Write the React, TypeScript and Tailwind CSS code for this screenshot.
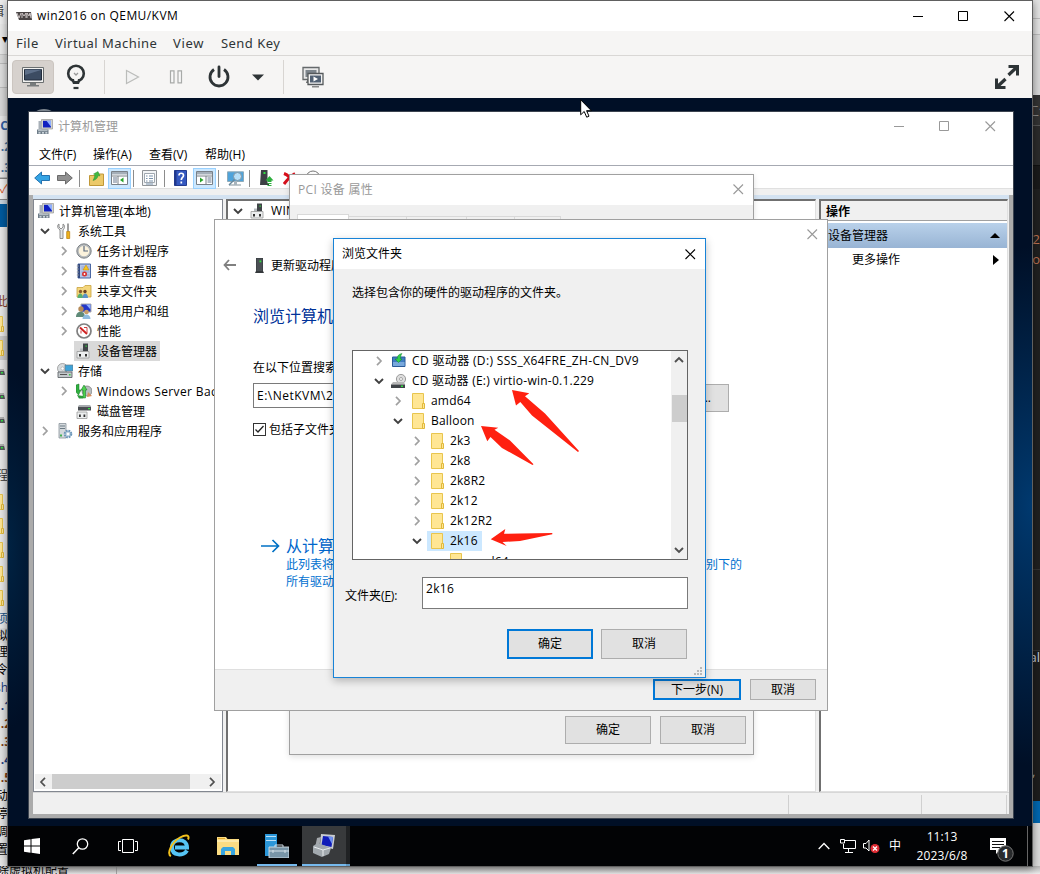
import React from 'react';

type Kids = { children?: React.ReactNode };

/* ---------- small shared glyphs ---------- */

function CloseX({ className = '' }: { className?: string }) {
  return (
    <svg width="11" height="11" viewBox="0 0 11 11" className={'shrink-0 ' + className}>
      <path d="M.5.5l9.500 9.500M10 .5L.5 10" stroke="currentColor" strokeWidth="1.1" fill="none" />
    </svg>
  );
}

function WindowButtons({ className }: { className: string }) {
  return (
    <div className={'flex items-center ' + className}>
      <svg width="11" height="11"><path d="M0 5.5h10" stroke="currentColor" /></svg>
      <svg width="11" height="11" className="ml-[34px]"><path d="M.5.5h9v9h-9z" stroke="currentColor" fill="none" /></svg>
      <CloseX className="ml-[35px]" />
    </div>
  );
}

function Chevron({ open = false, color }: { open?: boolean; color?: string }) {
  return open ? (
    <svg width="10" height="10" viewBox="0 0 10 10" className="shrink-0">
      <path d="M1 3l4 4 4-4" stroke={color || '#404040'} strokeWidth="1.900" fill="none" />
    </svg>
  ) : (
    <svg width="10" height="10" viewBox="0 0 10 10" className="shrink-0">
      <path d="M3 .8l4 4.200-4 4.200" stroke={color || '#a0a0a0'} strokeWidth="1.700" fill="none" />
    </svg>
  );
}

function Ico({ children, s = 16 }: Kids & { s?: number }) {
  return (
    <svg width={s} height={s} viewBox="0 0 16 16" className="shrink-0">
      {children}
    </svg>
  );
}

const MgmtIcon = ({ s = 16 }: { s?: number }) => (
  <Ico s={s}>
    <path d="M4.500 .5H15.500v9.500H4.500z" fill="#d4d4cc" stroke="#888" strokeWidth=".6" />
    <path d="M6 1.800h8v6.700H6z" fill="#1020c0" />
    <path d="M9.500 1.800H14v6z" fill="#8fb0ff" />
    <path d="M1.500 2h3v8h-3z" fill="#a8b0b8" />
    <path d="M0 10.500h11.500v4.500H0z" fill="#6e7c88" />
    <path d="M1 11.200h9.500v1H1z" fill="#c5ced4" />
    <path d="M1.500 13.200h2v1.300h-2zM5 13.200h2v1.300H5zM8.300 13.200h2v1.300h-2z" fill="#e8eef2" />
  </Ico>
);
const ToolsIcon = () => (
  <Ico>
    <path d="M2 1v3l2 2 2-2V1c2 1 2 4 0 6v8.500H3V7C0 5 0 2 2 1z" fill="#e2e4e6" stroke="#777" strokeWidth=".8" />
    <path d="M11 .5v8" stroke="#777" strokeWidth="1.400" />
    <path d="M9.700 8.500h3v7h-3z" fill="#eeb21c" stroke="#b57a08" strokeWidth=".7" />
  </Ico>
);
const ClockIcon = () => (
  <Ico>
    <circle cx="8" cy="8" r="7.200" fill="#b5b9bc" stroke="#73787c" strokeWidth=".9" />
    <circle cx="8" cy="8" r="5.300" fill="#fbf2dc" />
    <path d="M8 3v5h4" stroke="#5a6a80" strokeWidth="1.200" fill="none" />
  </Ico>
);
const EventIcon = () => (
  <Ico>
    <path d="M2 1h12.500v14H2z" fill="#b7c6e8" stroke="#3a5a9a" strokeWidth=".9" />
    <path d="M2 1h2v14H2z" fill="#334a80" />
    <path d="M.8 3h2M.8 6h2M.8 9h2M.8 12h2" stroke="#999" />
    <path d="M5.500 4h8M5.500 6h8M5.500 9h8M5.500 12h8" stroke="#7d92c4" strokeWidth=".6" />
    <path d="M10 2l3 5H7z" fill="#f6c520" stroke="#c48a00" strokeWidth=".5" />
    <circle cx="8.500" cy="11" r="2.500" fill="#d83030" />
    <circle cx="8.500" cy="11" r=".9" fill="#fff" />
  </Ico>
);
const ShareIcon = () => (
  <Ico>
    <path d="M1 4.500h6L9 2.500h6V14H1z" fill="#f4d67c" stroke="#c9a23c" strokeWidth=".8" />
    <circle cx="4.500" cy="8.500" r="1.700" fill="#8a5a30" /><circle cx="9" cy="8.500" r="1.700" fill="#6a4226" />
    <path d="M1.500 15c0-6 5.500-6 5.500 0z" fill="#58b070" /><path d="M6.500 15c0-6 5.500-6 5.500 0z" fill="#5a92c8" />
  </Ico>
);
const UsersIcon = () => (
  <Ico>
    <path d="M5 1h10v8H5z" fill="#2438c8" stroke="#aaa" /><path d="M10 1.500h4.500v5z" fill="#90b0ff" />
    <circle cx="5" cy="6" r="2.700" fill="#b58a58" /><path d="M0 14c0-7 9-7 9 0z" fill="#5f8a78" />
    <circle cx="10.500" cy="9" r="2.300" fill="#c79c6a" /><path d="M6.500 16c0-6 8-6 8 0z" fill="#8fbce0" />
  </Ico>
);
const PerfIcon = () => (
  <Ico>
    <circle cx="8" cy="8" r="7" fill="#fff" stroke="#808080" strokeWidth="1.700" />
    <path d="M4 4.500l7 6.500" stroke="#d02020" strokeWidth="1.900" />
    <path d="M8 4.500h3v5.500M5 7.500v3" stroke="#d04040" strokeWidth="1" fill="none" />
  </Ico>
);
const DeviceIcon = () => (
  <Ico>
    <path d="M7 .5h5v8H7z" fill="#404448" /><path d="M9.500 2.500h1.300v1.300H9.500z" fill="#30e040" />
    <path d="M4 5.500h3V9H4z" fill="#b8bcc0" />
    <path d="M1 8.500h12v6.500H1z" fill="#eceeef" stroke="#999" strokeWidth=".8" />
    <path d="M3 11h2v2.500H3zM9 11h2v2.500H9z" fill="#333" />
  </Ico>
);
const StorageIcon = () => (
  <Ico>
    <circle cx="5.500" cy="5.500" r="5" fill="#d8dcde" stroke="#888" strokeWidth=".7" /><circle cx="5.500" cy="5.500" r="1.600" fill="#fff" stroke="#999" strokeWidth=".5" />
    <path d="M8 2h8v6H8z" fill="#3fa3d8" stroke="#6c7d88" strokeWidth=".7" />
    <path d="M1 9h14v5.500H1z" fill="#c3c8cb" stroke="#62686c" strokeWidth=".9" /><path d="M3 11.500h7" stroke="#555" /><path d="M12 11h1.500v1.500H12z" fill="#30d040" />
  </Ico>
);
const BackupIcon = () => (
  <Ico>
    <circle cx="11" cy="8" r="5" fill="#b8bdc0" stroke="#777" strokeWidth=".7" /><path d="M12 9l4 4-5 1z" fill="#d89060" />
    <path d="M0 2l3-1v6h2l-2.500 5L0 9z" fill="#30b040" stroke="#107020" strokeWidth=".5" />
    <path d="M7 15V7H5l3-5 3 5H9.500v8z" fill="#4fd050" stroke="#107020" strokeWidth=".5" />
    <path d="M1 12l6 1v2.500H3z" fill="#2a9a3a" />
  </Ico>
);
const DiskIcon = () => (
  <Ico>
    <path d="M2 3.500h13v4H2z" fill="#4a4e52" /><path d="M3 2h11l1 1.500H2z" fill="#a8acb0" /><path d="M12 5h2v1.200h-2z" fill="#30e040" />
    <path d="M1 9h10v6.500H1z" fill="#eceeef" stroke="#999" strokeWidth=".8" /><path d="M3 11.500h1.800v2.500H3zM7.500 11.500h1.800v2.500H7.500z" fill="#333" />
  </Ico>
);
const ServicesIcon = () => (
  <Ico>
    <path d="M2 .5h7v14.500H2z" fill="#d4d9dd" stroke="#89939a" strokeWidth=".8" />
    <path d="M3 3h5M3 5.500h5" stroke="#6b7a84" /><path d="M3 11.500h2v2H3z" fill="#40b050" />
    <circle cx="11" cy="11" r="3.300" fill="#bcd0e0" stroke="#6a95b8" strokeWidth="2" strokeDasharray="1.700 .9" /><circle cx="11" cy="11" r="1.300" fill="#fff" />
  </Ico>
);
const FolderIcon = () => (
  <svg width="14" height="16" viewBox="0 0 14 16" className="shrink-0">
    <path d="M.5.500h11v15H.5z" fill="#ffe694" stroke="#e8c54e" />
    <path d="M10.500 10.500h2v5h-2z" fill="#ffe694" stroke="#e0b93c" />
  </svg>
);
const TowerIcon = () => (
  <svg width="9" height="15" viewBox="0 0 9 15"><path d="M1 0h7v13l1 2H0l1-2z" fill="#35393c" /><path d="M1.500.5h6v12.500h-6z" fill="#4b5054" /><path d="M4.500 2.500h1.800v1.800H4.500z" fill="#30e040" /></svg>
);

/* ---------- background strips ---------- */

const leftStrip: { h: number; t?: string; c: string }[] = [
  { h: 24, t: '辑', c: 'bg-[#ededed] text-[#444] pr-[4px]' },
  { h: 31, t: '▾', c: 'bg-[#e8e8e8] text-black border-b border-[#c6c6c6]' },
  { h: 9, c: 'bg-[#dadada] border-b border-[#bbb]' },
  { h: 24, c: 'bg-[#dedede] border-b border-[#bbb]' },
  { h: 28, c: 'bg-[#d8d8d8]' },
  { h: 20, t: 'C', c: 'bg-[#e6e6e6] text-[#315c9f] font-bold' },
  { h: 22, t: '.2', c: 'bg-[#e6e6e6] text-[#4270a0] font-bold' },
  { h: 20, t: '.3', c: 'bg-[#e6e6e6] text-[#4270a0] font-bold border-b border-[#bbb]' },
  { h: 22, t: '✓', c: 'bg-[#f0f0f0] text-[#d86030] border-y border-[#888]' },
  { h: 27, c: 'bg-[#005a9e] border-t-4 border-[#c8d4de]' },
  { h: 65, c: 'bg-[#e7e7e7]' },
  { h: 20, t: '此', c: 'bg-[#e7e7e7] text-[#84402c]' },
  { h: 24, t: 'F', c: 'bg-[#e7e7e7]' },
  { h: 24, t: 'F', c: 'bg-[#c9c9c9]' },
  { h: 24, t: 'D', c: 'bg-[#e7e7e7]' },
  { h: 24, t: 'D', c: 'bg-[#e7e7e7]' },
  { h: 24, t: 'D', c: 'bg-[#e7e7e7]' },
  { h: 30, t: 'D', c: 'bg-[#e7e7e7]' },
  { h: 28, t: '程', c: 'bg-[#e7e7e7] text-[#333]' },
  { h: 24, t: 'F', c: 'bg-[#e7e7e7]' },
  { h: 24, t: 'F', c: 'bg-[#e7e7e7]' },
  { h: 24, t: 'F', c: 'bg-[#e7e7e7]' },
  { h: 24, t: 'F', c: 'bg-[#e7e7e7]' },
  { h: 24, t: 'F', c: 'bg-[#e7e7e7]' },
  { h: 18, t: '项', c: 'bg-[#e7e7e7] text-[#225588]' },
  { h: 15, t: '拟', c: 'bg-[#dcdcdc] text-black' },
  { h: 18, t: '理', c: 'bg-[#e3e3e3] text-black' },
  { h: 18, t: '令', c: 'bg-[#e3e3e3] text-black' },
  { h: 18, t: 'sh', c: 'bg-[#e3e3e3] text-[#203c80]' },
  { h: 18, t: '.1', c: 'bg-[#e3e3e3] text-[#203c80] font-bold' },
  { h: 18, t: '.2', c: 'bg-[#e3e3e3] text-[#7a3a10] font-bold' },
  { h: 18, t: '.3', c: 'bg-[#e3e3e3] text-[#7a3a10] font-bold' },
  { h: 18, t: '.4', c: 'bg-[#e3e3e3] text-[#203c80] font-bold' },
  { h: 18, t: '.5', c: 'bg-[#e3e3e3] text-[#7a3a10] font-bold' },
  { h: 18, t: '动', c: 'bg-[#e3e3e3] text-black' },
  { h: 18, t: '停', c: 'bg-[#e3e3e3] text-black' },
  { h: 18, t: '调', c: 'bg-[#e3e3e3] text-black' },
  { h: 17, t: '置', c: 'bg-[#e3e3e3] text-black' },
];

function StripItem({ t }: { t?: string }) {
  if (t === 'F') return <span className="mr-[3px] shrink-0"><FolderIcon /></span>;
  if (t === 'D') return <svg width="12" height="8" className="mr-[3px] shrink-0"><path d="M0 2h11l1 5H0z" fill="#55595c" /><path d="M0 1h11v2H0z" fill="#b0b0b0" /><path d="M8 4h2v1.500H8z" fill="#3d4" /></svg>;
  return <span className={t && t.startsWith('.') ? 'mr-[-3px]' : ''}>{t}</span>;
}

function Backdrop() {
  return (
    <div className="flex h-full flex-col">
      <div className="flex h-[866px] justify-between">
        <div className="flex w-[8px] flex-col overflow-hidden text-[12px] leading-none">
          {leftStrip.map((r, i) => (
            <div key={i} style={{ height: r.h }} className={'flex shrink-0 items-center justify-end overflow-hidden ' + r.c}>
              <StripItem t={r.t} />
            </div>
          ))}
        </div>
        <div className="flex w-[8px] flex-col overflow-hidden text-[13px] leading-none">
          <div className="h-[18px] bg-[#e2e2e2]" />
          <div className="h-[17px] border-y border-[#bbb] bg-[#e2e2e2]" />
          <div className="h-[60px] bg-[#d8d8d8]" />
          <div className="flex h-[30px] items-center justify-start bg-[#333] text-[#888]"><span className="ml-[-6px] whitespace-nowrap">工作</span></div>
          <div className="h-[40px] border-t border-[#555] bg-[#2b2b2b]" />
          <div className="h-[24px] border-t border-[#111] bg-[#1a1a1a]" />
          <div className="h-[44px] bg-[#202020]" />
          <div className="flex h-[20px] justify-end bg-[#202020] text-[#bd7253]">=2</div>
          <div className="flex h-[316px] justify-end bg-[#202020] text-[#bd7253]">ro</div>
          <div className="h-[82px] border-y border-[#333] bg-[#202020]" />
          <div className="flex h-[114px] justify-end bg-[#1d1d1d] text-[#c5cede]">al</div>
          <div className="flex h-[36px] bg-[#1d1d1d] text-[#aaa]">,</div>
          <div className="h-[22px] bg-[#0067b0]" />
          <div className="h-[43px] bg-[#dcdcdc]" />
        </div>
      </div>
      <div className="flex h-2 overflow-hidden bg-gradient-to-b from-[#b5b5b5] to-[#ececec] text-[12px] leading-[9px] text-black">
        <div className="w-[117px] border-r border-[#aaa] whitespace-nowrap"><span className="ml-[-3px]">除虚拟机配置</span></div>
      </div>
    </div>
  );
}

/* ---------- viewer chrome ---------- */

function ViewerChrome() {
  return (
    <>
      <div className="flex h-[30px] items-center bg-white pl-2 text-[12px] text-black">
        <svg width="16" height="10" viewBox="0 0 16 10"><path d="M0 1h15l1 8H3z" fill="#4a4545" /><path d="M1 2l2 5 2-5M6 7V2l2 3 2-3v5M11 7V2l2 3 1-3 1 5" stroke="#d8d0d0" strokeWidth=".9" fill="none" /></svg>
        <span className="ml-[5px] tracking-[.42px]">win2016 on QEMU/KVM</span>
        <WindowButtons className="ml-auto mr-[17px] text-black" />
      </div>
      <div className="flex h-[25px] items-center border-b border-[#d9d7d5] bg-[#f6f5f4] pl-2 pt-[2px] font-['Noto_Sans'] text-[13px] text-[#2e3436]">
        <span className="w-[39px] tracking-[.5px]">File</span>
        <span className="w-[118px] tracking-[.47px]">Virtual Machine</span>
        <span className="w-[48px] tracking-[.7px]">View</span>
        <span className="tracking-[.45px]">Send Key</span>
      </div>
      <div className="flex h-[42px] items-center bg-[#f6f5f4] pl-1">
        <div className="flex h-[34px] w-[42px] items-center justify-center rounded-[4px] border border-[#cbc5c0] bg-[#d6d1cd]">
          <svg width="24" height="20" viewBox="0 0 24 20"><path d="M1.500.5h21v15h-21z" fill="#f2f2f0" stroke="#6b6f70" /><path d="M3.500 2.500h17v10.500h-17z" fill="#3c4c62" stroke="#222d3c" /><path d="M4 8l16-5v-.5H4z" fill="#5d6f88" /><path d="M9 16h6v2h3v1.500H6V18h3z" fill="#777b7c" /></svg>
        </div>
        <svg width="20" height="26" viewBox="0 0 20 26" className="ml-[12px]"><circle cx="10" cy="9.500" r="7.800" fill="none" stroke="#2e3436" strokeWidth="2.600" /><path d="M5 15l2 5h6l2-5z" fill="#2e3436" /><path d="M7.500 13h5l-1 4h-3z" fill="#f6f5f4" /><path d="M8 9l2 2 2-2" stroke="#999" strokeWidth="1.300" fill="none" /><path d="M7.500 24h5" stroke="#2e3436" strokeWidth="2.200" /></svg>
        <div className="ml-[18px] h-[34px] w-px bg-[#d8d5d2]" />
        <svg width="15" height="16" viewBox="0 0 15 16" className="ml-[20px]"><path d="M1.500 1.500L13.500 8l-12 6.500z" fill="#f2f2f2" stroke="#bbbcba" strokeWidth="1.200" /></svg>
        <svg width="14" height="14" viewBox="0 0 14 14" className="ml-[29px]"><path d="M1.500.8h3.500v12H1.500zM9 .8h3.500v12H9z" fill="#f8f8f8" stroke="#a8aaa8" strokeWidth="1.200" /></svg>
        <svg width="22" height="24" viewBox="0 0 22 24" className="ml-[25px]"><path d="M6 4.500a9 9 0 1 0 10 0" stroke="#2e3436" strokeWidth="2.800" fill="none" /><path d="M11 2v9.500" stroke="#2e3436" strokeWidth="2.800" strokeLinecap="round" /></svg>
        <svg width="12" height="7" viewBox="0 0 12 7" className="ml-[22px]"><path d="M0 .5h12L6 6.500z" fill="#2e3436" /></svg>
        <div className="ml-[19px] h-[34px] w-px bg-[#d8d5d2]" />
        <svg width="22" height="22" viewBox="0 0 22 22" className="ml-[18px]">
          <path d="M1 1.500h16v12H1z" fill="#e8e8e8" stroke="#65696b" strokeWidth="1.300" /><path d="M3.500 4h11v7h-11z" fill="#7d858c" /><path d="M5 14h3v3H4v-1.500h1z" fill="#777" />
          <path d="M6 7.500h15v11H6z" fill="#f3f3f3" stroke="#55595b" strokeWidth="1.300" /><path d="M8 9.500h11v7H8z" fill="#526173" /><path d="M11.500 10.500v5l4.500-2.500z" fill="#fff" /><path d="M10 20h7v1.500h-7z" fill="#888" />
        </svg>
        <svg width="26" height="26" viewBox="0 0 26 26" className="ml-auto mr-[12px]">
          <path d="M14.500 1H25v10.500h-3V6.500L20 4h-5.500z" fill="#2e3436" /><path d="M23 3l-8.500 8" stroke="#2e3436" strokeWidth="3.200" />
          <path d="M11.500 25H1V14.500h3v5L6 22h5.500z" fill="#2e3436" /><path d="M3 23l8.500-8" stroke="#2e3436" strokeWidth="3.200" />
        </svg>
      </div>
    </>
  );
}

/* ---------- computer management ---------- */

type Row = { l: number; ch?: 'o' | 'c'; icon: React.ReactNode; t: string; sel?: boolean; cls?: string };
const tree: Row[] = [
  { l: 0, icon: <MgmtIcon />, t: '计算机管理(本地)', cls: 'tracking-[.1px]' },
  { l: 1, ch: 'o', icon: <ToolsIcon />, t: '系统工具' },
  { l: 2, ch: 'c', icon: <ClockIcon />, t: '任务计划程序' },
  { l: 2, ch: 'c', icon: <EventIcon />, t: '事件查看器' },
  { l: 2, ch: 'c', icon: <ShareIcon />, t: '共享文件夹' },
  { l: 2, ch: 'c', icon: <UsersIcon />, t: '本地用户和组' },
  { l: 2, ch: 'c', icon: <PerfIcon />, t: '性能' },
  { l: 2, icon: <DeviceIcon />, t: '设备管理器', sel: true },
  { l: 1, ch: 'o', icon: <StorageIcon />, t: '存储' },
  { l: 2, ch: 'c', icon: <BackupIcon />, t: 'Windows Server Bac', cls: 'tracking-[.38px]' },
  { l: 2, icon: <DiskIcon />, t: '磁盘管理' },
  { l: 1, ch: 'c', icon: <ServicesIcon />, t: '服务和应用程序' },
];

function TreeRow({ r }: { r: Row }) {
  return (
    <div className={'flex h-5 items-center whitespace-nowrap ' + (r.l === 0 ? 'pl-1' : r.l === 1 ? 'pl-[6px]' : 'pl-[25px]')}>
      {r.l > 0 && <span className={'flex shrink-0 ' + (r.l === 1 ? 'w-[16px]' : 'w-[15px]')}>{r.ch && <Chevron open={r.ch === 'o'} />}</span>}
      <span className={'flex h-5 items-center pr-[3px] ' + (r.l === 0 ? '' : r.l === 1 ? 'pl-[1px] ' : 'pl-[2px] ') + (r.sel ? 'bg-[#d9d9d9]' : '')}>
        {r.icon}
        <span className={'ml-[5px] pt-px ' + (r.cls || '')}>{r.t}</span>
      </span>
    </div>
  );
}

function Toggle({ right = false }: { right?: boolean }) {
  return (
    <span className="flex h-[21px] w-[23px] items-center justify-center border border-[#99d1ff] bg-[#cce8ff]">
      <svg width="17" height="14" viewBox="0 0 17 14">
        <path d="M.5.5h16v13H.5z" fill="#fff" stroke="#788088" /><path d="M1 1h15v2.500H1z" fill="#a4aeb8" /><path d="M1 5h15" stroke="#788088" />
        {right ? (
          <><path d="M10 5v8" stroke="#788088" /><path d="M11.500 7h4M11.500 9h4M11.500 11h4" stroke="#687890" /><path d="M4 6.500v5L7.500 9z" fill="#28a428" /></>
        ) : (
          <><path d="M7 5v8" stroke="#788088" /><path d="M2 7h4M2 9h4M2 11h4" stroke="#687890" /><path d="M12.500 6.500v5L9 9z" fill="#28a428" /></>
        )}
      </svg>
    </span>
  );
}
const Sep = ({ className }: { className: string }) => <span className={'h-[17px] w-px bg-[#8c8c8c] ' + className} />;
const Slot = ({ children, className }: Kids & { className: string }) => <span className={'flex h-[21px] items-center justify-center ' + className}>{children}</span>;

function Toolbar() {
  return (
    <div className="flex h-[23px] items-center border-b border-[#e0e0e0] pl-[1px] pt-[2px]">
      <Slot className="w-6"><svg width="16" height="14" viewBox="0 0 16 14"><path d="M.7 7l6.800-6v3.500h8v5h-8V13z" fill="#35a4e4" stroke="#1668a8" strokeWidth=".9" /></svg></Slot>
      <Slot className="w-[22px]"><svg width="16" height="14" viewBox="0 0 16 14"><path d="M15.300 7L8.500 1v3.500h-8v5h8V13z" fill="#909090" stroke="#606060" strokeWidth=".9" /></svg></Slot>
      <Sep className="ml-[3px] mr-1" />
      <Slot className="w-6"><svg width="15" height="15" viewBox="0 0 15 15"><path d="M.5 4.500h6l1.500-1.500h6.500v11.500H.5z" fill="#ecc969" stroke="#c09838" /><path d="M4 9.500c1.500-3 1.500-4 2-5.500L4.500 3 9 .5l2 4.500-1.700-.5C8.500 7 7 9 4 9.500z" fill="#40b840" stroke="#1c8428" strokeWidth=".4" /></svg></Slot>
      <Toggle />
      <Sep className="ml-[2px] mr-1" />
      <Slot className="w-[23px]"><svg width="16" height="16" viewBox="0 0 16 16"><path d="M.5.500h14v15h-14z" fill="#f2f4f6" stroke="#909498" /><path d="M2.500 3.500h10v9h-10z" fill="#fff" stroke="#a0a8b0" /><path d="M4 6h1.500M7 6h4M4 8.500h1.500M7 8.500h4M4 11h1.500M7 11h4M4 14h7" stroke="#7892ac" /></svg></Slot>
      <Sep className="ml-[3px] mr-1" />
      <Slot className="mr-px w-[23px]"><svg width="13" height="16" viewBox="0 0 13 16"><path d="M.5.500h12v15H.5z" fill="#3458c0" stroke="#243c90" /><path d="M.5.500h2v15h-2z" fill="#20388c" /><path d="M5 5.500C5 2.500 9.500 2.500 9.500 5.500 9.500 7.500 7.300 7.500 7.300 10M7.300 11.500v2" stroke="#fff" strokeWidth="1.700" fill="none" /></svg></Slot>
      <Toggle right />
      <Sep className="ml-[2px] mr-1" />
      <Slot className="w-6"><svg width="17" height="15" viewBox="0 0 17 15"><path d="M.5.800h16v9.700H.5z" fill="#4fa3da" stroke="#8faab8" /><path d="M2 13.500h12v1H2z" fill="#809098" /><path d="M7 10h3v4H7z" fill="#a8b4bc" /><circle cx="10.500" cy="5.500" r="4" fill="#b8e0f8" stroke="#7f95a4" /><path d="M7.500 8.500L2 14" stroke="#68889c" strokeWidth="1.500" /></svg></Slot>
      <Sep className="ml-[2px] mr-1" />
      <Slot className="ml-px w-6"><svg width="14" height="16" viewBox="0 0 14 16"><path d="M1 0h6.500v13H9v2H0z" fill="#3c4044" /><path d="M3.500 2h2v2h-2z" fill="#30e040" /><path d="M9.500 6l4 4.500h-2V12h-4v-1.500h-2zM7.500 13h4v1h-4zM7.500 15h4v1h-4z" fill="#2cae3c" /></svg></Slot>
      <Slot className="w-[20px]"><svg width="13" height="13" viewBox="0 0 13 13"><path d="M1 1.500C5 3 9 8 11 12M12 1.500C7 4 4 8 1 12" stroke="#d8101c" strokeWidth="3" fill="none" /></svg></Slot>
      <Slot className="ml-[4px] w-[20px]"><svg width="16" height="16" viewBox="0 0 16 16"><circle cx="8" cy="8" r="7" fill="#fff" stroke="#777" /><path d="M5 4h6l-3 4z" fill="#333" /></svg></Slot>
    </div>
  );
}

function Management() {
  return (
    <div className="absolute left-[28px] top-[111px] flex h-[708px] w-[986px] flex-col border border-[#3c4450] bg-white">
      <div className="flex h-[29px] items-center pl-2 text-[12px] text-[#999]">
        <MgmtIcon />
        <span className="ml-[5px]">计算机管理</span>
        <WindowButtons className="ml-auto mr-[17px] text-[#999]" />
      </div>
      <div className="flex h-[25px] items-center border-b border-[#a6a9b2] pl-[10px] pt-[3px] text-[12px]">
        <span className="w-[54px]">文件(F)</span><span className="w-[56px]">操作(A)</span><span className="w-[56px]">查看(V)</span><span>帮助(H)</span>
      </div>
      <Toolbar />
      <div className="h-[6px] bg-[#f0f0f0]" />
      <div className="flex flex-1 flex-col border-x-4 border-b-4 border-[#ababab] bg-[#f0f0f0]">
        <div className="h-1 bg-[#d3e2f1]" />
        <div className="flex h-[593px]">
          <div className="flex w-[190px] flex-col border border-[#828790] bg-white pt-[1px] text-[12px]">
            <div className="flex-1 overflow-hidden">{tree.map((r) => <TreeRow key={r.t} r={r} />)}</div>
            <div className="mx-px mb-[2px] flex h-[15px] items-center bg-[#f0f0f0] pl-[3px] pr-1">
              <span className="flex w-[14px] rotate-180 justify-end"><Chevron color="#505050" /></span>
              <span className="h-full w-[138px] bg-[#cdcdcd]" />
              <span className="ml-auto"><Chevron color="#505050" /></span>
            </div>
          </div>
          <div className="ml-[3px] w-[590px] border-l-2 border-t-2 border-r border-b border-b-[#e0e0e0] border-l-[#707070] border-r-[#e0e0e0] border-t-[#707070] bg-white pl-[5px] text-[12px]">
            <div className="flex h-[20px] items-center"><Chevron open /><span className="ml-[7px]"><DeviceIcon /></span><span className="ml-[5px] tracking-[.3px]">WIN2016</span></div>
          </div>
          <div className="ml-[3px] w-[189px] border-l-2 border-t-2 border-r border-b border-b-[#e0e0e0] border-l-[#707070] border-r-[#e0e0e0] border-t-[#707070] bg-white text-[12px]">
            <div className="flex h-[20px] items-center border-b border-[#a0a0a0] bg-[#f0f0f0] pl-[5px] pt-[2px] font-bold">操作</div>
            <div className="mt-[2px] flex h-[25px] items-center justify-between bg-gradient-to-b from-[#b9d1ea] to-[#98b4d4] pl-[7px] pr-[7px]">
              <span>设备管理器</span>
              <svg width="10" height="5"><path d="M5 0l5 5H0z" /></svg>
            </div>
            <div className="flex h-[24px] items-center justify-between pl-[31px] pr-[8px]"><span>更多操作</span><svg width="6" height="10"><path d="M0 0l6 5-6 5z" /></svg></div>
          </div>
        </div>
        <div className="flex flex-1 border-t border-[#d7d7d7] pt-[2px]">
          <span className="h-[19px] w-[756px] border-r border-[#d0d0d0]" />
          <span className="h-[19px] w-[133px] border-r border-[#d0d0d0]" />
          <span className="h-[19px] w-[85px] border-r border-[#d0d0d0]" />
        </div>
      </div>
    </div>
  );
}

/* ---------- dialogs ---------- */

function Button({ children, primary = false, className }: Kids & { primary?: boolean; className: string }) {
  return (
    <button className={'flex items-center justify-center bg-[#e1e1e1] text-[12px] ' + (primary ? 'border-2 border-[#0078d7] ' : 'border border-[#adadad] ') + className}>
      {children}
    </button>
  );
}

function PciDialog() {
  return (
    <div className="absolute left-[289px] top-[174px] flex h-[581px] w-[465px] flex-col border border-[#a0a0a0] bg-[#f0f0f0] shadow-[0_2px_6px_rgba(0,0,0,.12)]">
      <div className="flex h-[30px] items-center justify-between bg-white pb-px pl-2 pr-[9px] text-[12px] text-[#999]"><span className="tracking-[.3px]">PCI 设备 属性</span><CloseX /></div>
      <div className="mt-[9px] flex h-[20px] items-end pl-[7px]">
        <span className="h-5 w-[52px] border border-[#d9d9d9] bg-white" />
        <span className="h-[18px] w-[58px] border-r border-t border-[#d9d9d9]" />
        <span className="h-[18px] w-[60px] border-r border-t border-[#d9d9d9]" />
        <span className="h-[18px] w-[48px] border-r border-t border-[#d9d9d9]" />
        <span className="h-[18px] w-[46px] border-r border-t border-[#d9d9d9]" />
      </div>
      <div className="mb-[10px] mr-[7px] mt-auto flex justify-end gap-[9px]">
        <Button className="h-7 w-[86px]">确定</Button><Button className="h-7 w-[86px]">取消</Button>
      </div>
    </div>
  );
}

function Wizard() {
  return (
    <div className="absolute left-[214px] top-[219px] flex h-[492px] w-[614px] flex-col border border-[#a0a0a0] bg-white text-[12px]">
      <div className="flex h-[28px] items-center justify-end pr-[9px] text-[#999]"><CloseX /></div>
      <div className="flex h-[34px] items-center pl-2">
        <svg width="13" height="12" viewBox="0 0 13 12"><path d="M6 1L1.500 6 6 11M1.500 6H13" stroke="#808080" strokeWidth="1.800" fill="none" /></svg>
        <span className="ml-[19px] pt-px"><TowerIcon /></span>
        <span className="ml-[7px] pt-[2px]">更新驱动程序</span>
      </div>
      <div className="mt-[22px] flex h-6 items-center pl-[38px] text-[16px] text-[#003399]">浏览计算机上</div>
      <div className="mt-[29px] flex h-5 items-center pl-[38px] pt-px">在以下位置搜索</div>
      <div className="mt-[7px] flex h-[28px] items-start justify-between pl-[38px] pr-[98px]">
        <div className="mt-[-1px] flex h-[25px] w-[380px] items-center border border-[#7a7a7a] pl-[3px] tracking-[.5px]">E:\NetKVM\2k16</div>
        <Button className="h-7 w-[86px] !justify-end pr-[17px]">...</Button>
      </div>
      <div className="mt-[7px] flex h-5 items-center pl-[38px]">
        <span className="flex h-[13px] w-[13px] items-center justify-center border border-[#333]"><svg width="11" height="9"><path d="M1.500 4.500l2.500 2.500 5.500-6" stroke="#222" strokeWidth="1.300" fill="none" /></svg></span>
        <span className="ml-[3px] pt-px">包括子文件夹</span>
      </div>
      <div className="mt-[97px] flex h-5 items-center pl-[46px] text-[16px] text-[#0066cc]">
        <svg width="19" height="14" viewBox="0 0 19 14"><path d="M0 7h17M11.500 1l6 6-6 6" stroke="#0071c5" strokeWidth="1.700" fill="none" /></svg>
        <span className="ml-[6px]">从计算机</span>
      </div>
      <div className="ml-[71px] flex w-[456px] justify-between leading-[17px] text-[#0070d0]">
        <span className="w-[50px]">此列表将所有驱动</span><span>别下的</span>
      </div>
      <div className="mt-auto flex h-[41px] gap-[9px] border-t border-[#dfdfdf] bg-[#f0f0f0] pl-[438px] pt-[9px]">
        <Button primary className="h-[21px] w-[88px]">下一步(N)</Button><Button className="h-[21px] w-[66px]">取消</Button>
      </div>
    </div>
  );
}

const folders: { ind: string; open?: boolean; t: string; sel?: boolean }[] = [
  { ind: 'pl-[40px]', t: 'amd64' },
  { ind: 'pl-[40px]', t: 'Balloon', open: true },
  { ind: 'pl-[59px]', t: '2k3' },
  { ind: 'pl-[59px]', t: '2k8' },
  { ind: 'pl-[59px]', t: '2k8R2' },
  { ind: 'pl-[59px]', t: '2k12' },
  { ind: 'pl-[59px]', t: '2k12R2' },
  { ind: 'pl-[59px]', t: '2k16', open: true, sel: true },
];

function BrowseDialog() {
  return (
    <div className="absolute left-[333px] top-[238px] flex h-[440px] w-[373px] flex-col border border-[#1883d7] bg-[#f0f0f0] text-[12px] shadow-[0_3px_8px_rgba(0,0,0,.25)]">
      <div className="flex h-[30px] items-center justify-between bg-white pl-2 pr-[9px]"><span>浏览文件夹</span><CloseX /></div>
      <div className="mt-[14px] h-5 pl-[18px] leading-5">选择包含你的硬件的驱动程序的文件夹。</div>
      <div className="ml-[18px] mt-[47px] flex h-[210px] w-[336px] overflow-hidden border border-[#646464] bg-white">
        <div className="flex-1 overflow-hidden whitespace-nowrap">
          <div className="flex h-5 items-center pl-[21px]">
            <Chevron />
            <svg width="14" height="14" viewBox="0 0 14 14" className="mb-[3px] ml-[8px]"><path d="M.5 4h12.500v9.500H.5z" fill="#3f7cc0" stroke="#2a5a98" /><path d="M1 9h11.500v4H1z" fill="#78a8dc" /><path d="M6.500 9.500L3 6h2.200c0-3 1.500-5 4.800-5.500C9 2 8.500 3 8.500 6H10z" fill="#2fd04a" stroke="#158030" strokeWidth=".5" /></svg>
            <span className="ml-[6px] tracking-[.35px]">CD 驱动器 (D:) SSS_X64FRE_ZH-CN_DV9</span>
          </div>
          <div className="flex h-5 items-center pl-[21px]">
            <Chevron open />
            <svg width="15" height="15" viewBox="0 0 15 15" className="ml-[7px]"><circle cx="10" cy="5" r="4.600" fill="#dedede" stroke="#888" strokeWidth=".8" /><circle cx="10" cy="5" r="1.500" fill="#fff" stroke="#888" strokeWidth=".7" /><path d="M2 8h11l1 2.500H0z" fill="#b8b8b8" /><path d="M0 10.500h14V14H0z" fill="#404448" /><path d="M10 11.500h2V13h-2z" fill="#30e040" /></svg>
            <span className="ml-[6px] tracking-[.24px]">CD 驱动器 (E:) virtio-win-0.1.229</span>
          </div>
          {folders.map((f) => (
            <div key={f.t} className={'flex h-5 items-center ' + f.ind}>
              <Chevron open={f.open} />
              <span className={'ml-[5px] flex h-5 items-center pl-1 pr-[4px] ' + (f.sel ? 'bg-[#cce8ff]' : '')}>
                <FolderIcon /><span className="ml-[5px] tracking-[.2px]">{f.t}</span>
              </span>
            </div>
          ))}
          <div className="flex h-5 items-center pl-[97px]"><FolderIcon /><span className="ml-[5px] pt-[2px] tracking-[.2px]">amd64</span></div>
        </div>
        <div className="flex w-4 flex-col items-center bg-[#f0f0f0] py-1">
          <span className="rotate-180"><Chevron open color="#505050" /></span>
          <span className="mt-[30px] h-[27px] w-[15px] bg-[#cdcdcd]" />
          <span className="mt-auto"><Chevron open color="#505050" /></span>
        </div>
      </div>
      <div className="mt-[17px] flex items-center pl-[11px]">
        <span className="w-[77px] pt-[5px]">文件夹(<span className="underline">F</span>):</span>
        <div className="h-[32px] w-[266px] border border-[#7a7a7a] bg-white pl-[3px] pt-[2px] tracking-[.3px]">2k16</div>
      </div>
      <div className="mt-[20px] flex gap-2 pl-[173px]">
        <Button primary className="h-[30px] w-[86px]">确定</Button><Button className="h-[30px] w-[86px]">取消</Button>
      </div>
      <div className="mt-auto flex justify-end pb-[2px] pr-[3px]">
        <svg width="8" height="8"><path d="M6 0h2v2H6zM3 3h2v2H3zM6 3h2v2H6zM0 6h2v2H0zM3 6h2v2H3zM6 6h2v2H6z" fill="#b8b8b8" /></svg>
      </div>
    </div>
  );
}

/* ---------- taskbar ---------- */

function Taskbar() {
  return (
    <div className="flex h-10 items-center bg-[#020305] pl-[16px] text-white">
      <svg width="16" height="16" viewBox="0 0 16 16"><path d="M0 2.200l6.500-.9v6.200H0zM7.500 1.100L16 0v7.500H7.500zM0 8.500h6.500v6.200L0 13.800zM7.500 8.500H16V16l-8.500-1.200z" fill="#fff" /></svg>
      <svg width="17" height="17" viewBox="0 0 17 17" className="ml-[32px]"><circle cx="10.500" cy="6" r="5.200" fill="none" stroke="#fff" strokeWidth="1.300" /><path d="M6.800 9.800L.8 16" stroke="#fff" strokeWidth="1.500" /></svg>
      <svg width="20" height="14" viewBox="0 0 20 14" className="ml-[29px]"><path d="M4.500.5h11v13h-11zM3 2.500H.5v9H3M17 2.500h2.500v9H17" stroke="#fff" fill="none" /></svg>
      <svg width="24" height="24" viewBox="0 0 24 24" className="ml-[29px]">
        <path d="M20 16.500C17 22 5 22.500 5 13 5 4 20 3.500 20 13.500H8" stroke="#55c4f4" strokeWidth="4" fill="none" />
        <path d="M4 22C-1 20 5 8 13 3.500c6-3.500 10-2.500 8 2" stroke="#f3c11c" strokeWidth="2" fill="none" />
      </svg>
      <svg width="22" height="19" viewBox="0 0 22 19" className="ml-[26px]"><path d="M0 0h9l1.500 2H22v16H0z" fill="#fbdc83" /><path d="M0 3h22v2H0z" fill="#fdeaab" /><path d="M1 1h7v1H1z" fill="#e0a82c" /><path d="M4 18v-6l2-2h10l2 2v6h-4v-4H8v4z" fill="#38a5e0" /></svg>
      <div className="ml-[18px] flex h-10 w-[40px] items-center justify-center border-b-2 border-[#76b9ed] pt-[2px]">
        <svg width="24" height="24" viewBox="0 0 24 24"><path d="M0 0h12v22H0z" fill="#2b96d8" /><path d="M1 2h10v1H1zM1 6h10v1H1z" fill="#bce0f6" /><path d="M4 13h20v11H4z" fill="#7895a8" stroke="#d4e0e8" strokeWidth=".9" /><path d="M10 13v-2h8v2" stroke="#d4e0e8" fill="none" /><path d="M4 17h20M8 16v3M20 16v3" stroke="#d4e0e8" /></svg>
      </div>
      <div className="ml-[5px] flex h-10 w-[44px] items-center justify-center border-b-2 border-[#76b9ed] bg-[#383a3c]">
        <svg width="24" height="24" viewBox="0 0 24 24"><path d="M9 1l14 1-2 14-13-3z" fill="#c8ccd0" /><path d="M11 3l10 1-1.500 10-10-2z" fill="#101cb8" /><path d="M16 3.500l5 .5-1 7z" fill="#6f92f0" /><path d="M5 5l4-1-2 10-4 1z" fill="#a4a8ac" /><path d="M1 13l5-3 13 5-2 6-7 3-9-4z" fill="#a2a9ae" /><path d="M2 14l9 3 7-2M11 17v6" stroke="#e8ecee" fill="none" /></svg>
      </div>
      <div className="h-10 w-1 border-b-2 border-[#5f98c4] bg-[#202224]" />
      <svg width="12" height="8" viewBox="0 0 12 8" className="ml-auto"><path d="M.7 7L6 1.500 11.300 7" stroke="#fff" strokeWidth="1.300" fill="none" /></svg>
      <svg width="16" height="14" viewBox="0 0 16 14" className="ml-[10px]"><path d="M5 1.500h10.500v8H3.500V5" stroke="#fff" fill="none" /><path d="M.5.500h4v3.500h-4zM8.500 10v3M5 13.500h8" stroke="#fff" fill="none" /></svg>
      <svg width="17" height="15" viewBox="0 0 17 15" className="ml-[7px]"><path d="M.5 4.500H3l3-3.500v11L3 9H.5z" stroke="#fff" fill="none" /><circle cx="12" cy="9.500" r="4.500" fill="#e02c34" /><path d="M10 7.500l4 4M14 7.500l-4 4" stroke="#fff" strokeWidth="1.300" /></svg>
      <span className="ml-[9px] text-[12px]">中</span>
      <div className="ml-[14px] w-[54px] whitespace-nowrap text-center text-[12px] leading-[19px]"><div>11:13</div><div className="tracking-[.1px]">2023/6/8</div></div>
      <svg width="26" height="26" viewBox="0 0 26 26" className="ml-[20px] mr-[12px] mt-[7px]"><path d="M1 1h16v12h-6l-4 4v-4H1z" fill="#fff" /><path d="M3 4.500h12M3 7.500h12M3 10.500h8" stroke="#111" /><circle cx="16.500" cy="16.500" r="7.700" fill="#282a2c" stroke="#777" /><text x="16.500" y="21" textAnchor="middle" fontSize="12" fontWeight="bold" fill="#fff">1</text></svg>
      <div className="mr-[4px] h-10 w-px bg-[#666]" />
    </div>
  );
}

/* ---------- annotation arrows and pointer ---------- */

function Arrows() {
  return (
    <svg width="105" height="170" viewBox="475 380 105 170" className="pointer-events-none absolute left-[475px] top-[380px]">
      <path d="M512 390L529.300 393.300 525 396.300 545 413.500 579 451 578 452 532 415.500 520.300 402 516 405.600z" fill="#ff2010" />
      <path d="M481 426L498.300 427.700 494.500 429.800 510 440.500 533.500 464.200 532.500 465 502 448 490.500 437 487.300 441.200z" fill="#ff2010" />
      <path d="M490.700 539.300L505.300 529 504 533.800 520 533.500 552.300 532.900V534.200L520 541 502.500 542 506.700 546z" fill="#ff2010" />
    </svg>
  );
}

export default function App() {
  return (
    <div className="relative h-[874px] w-[1040px] overflow-hidden bg-[#e8e8e8] font-['Open_Sans','Noto_Sans_CJK_SC',sans-serif] text-[12px] text-black">
      <Backdrop />
      <div className="absolute left-[7px] top-0 flex h-[867px] w-[1026px] flex-col border border-[#606060] shadow-[0_2px_8px_rgba(0,0,0,.45)]">
        <ViewerChrome />
        <div className="flex-1 bg-[#000f26] bg-[radial-gradient(ellipse_120px_260px_at_right_56%,#00396f,transparent),radial-gradient(ellipse_40px_180px_at_left_62%,#002242,transparent)]">
          <svg width="30" height="14" viewBox="0 0 30 14" className="ml-[21px] mt-[9px]"><path d="M0 14C4-2 26-2 30 14z" fill="#7c858e" /><path d="M4 14C8 2 22 2 26 14z" fill="#3c4650" /></svg>
        </div>
        <Taskbar />
      </div>
      <Management />
      <PciDialog />
      <Wizard />
      <BrowseDialog />
      <Arrows />
      <svg width="12" height="19" viewBox="0 0 12 19" className="absolute left-[580px] top-[99px]"><path d="M.7.800v15l3.500-3.300 2.500 5.700 2.300-1-2.400-5.500h4.800z" fill="#fff" stroke="#000" /></svg>
    </div>
  );
}
